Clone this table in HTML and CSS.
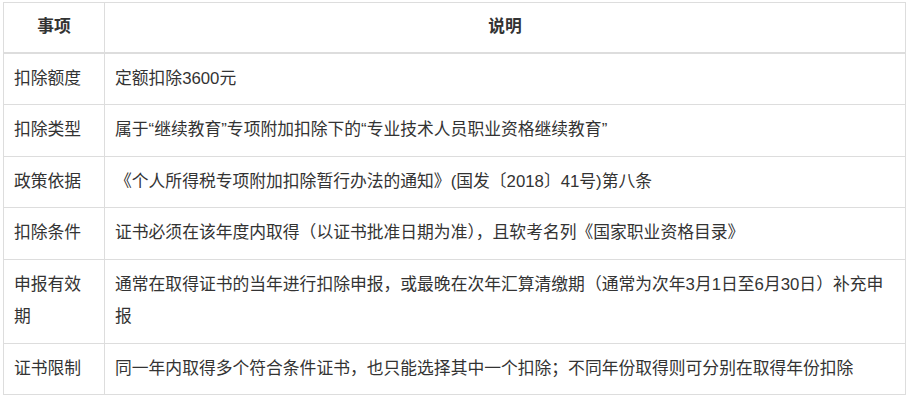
FILE: index.html
```html
<!DOCTYPE html>
<html lang="zh-CN">
<head>
<meta charset="utf-8">
<link rel="stylesheet" href="styles.css">
</head>
<body>
<div class="wrap">
<table class="info">
  <thead>
    <tr><th class="c1">事项</th><th>说明</th></tr>
  </thead>
  <tbody>
    <tr><td>扣除额度</td><td>定额扣除3600元</td></tr>
    <tr><td>扣除类型</td><td>属于“继续教育”专项附加扣除下的“专业技术人员职业资格继续教育”</td></tr>
    <tr><td>政策依据</td><td>《个人所得税专项附加扣除暂行办法的通知》(国发〔2018〕41号)第八条</td></tr>
    <tr><td>扣除条件</td><td>证书必须在该年度内取得（以证书批准日期为准），且软考名列《国家职业资格目录》</td></tr>
    <tr><td>申报有效期</td><td>通常在取得证书的当年进行扣除申报，或最晚在次年汇算清缴期（通常为次年3月1日至6月30日）补充申报</td></tr>
    <tr><td>证书限制</td><td>同一年内取得多个符合条件证书，也只能选择其中一个扣除；不同年份取得则可分别在取得年份扣除</td></tr>
  </tbody>
</table>
</div>
</body>
</html>
```
FILE: styles.css
```css
html, body { margin: 0; padding: 0; background: #fff; }
.wrap { padding: 2px 1px 0 3px; }
.info {
  width: 903px;
  border-collapse: collapse;
  font-family: "Liberation Sans", "Noto Sans CJK SC", sans-serif;
  font-size: 16.8px;
  color: #333;
  table-layout: fixed;
}
.info th, .info td {
  border: 1px solid #ddd;
  padding: 9px 10px;
  line-height: 32.5px;
  text-align: left;
  vertical-align: middle;
}
.info th {
  font-weight: bold;
  text-align: center;
  padding: 8px 10px;
  border-bottom: 2px solid #ddd;
}
.info .c1 { width: 80px; }
```
